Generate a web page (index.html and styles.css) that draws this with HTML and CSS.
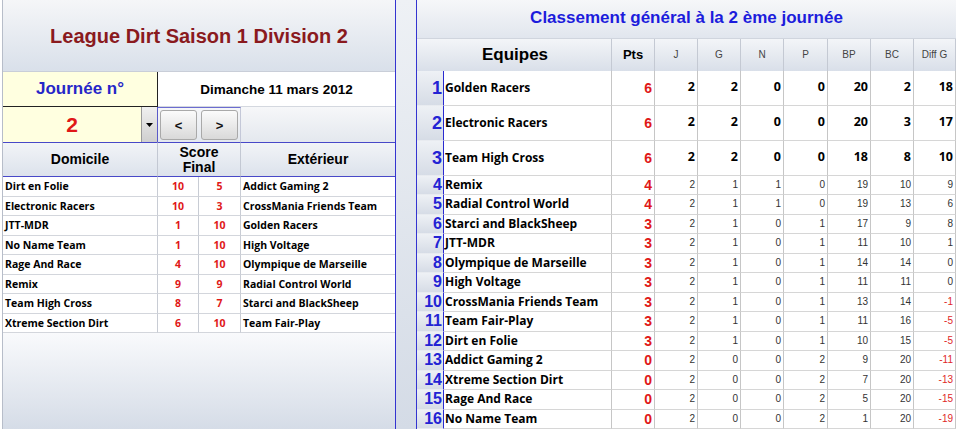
FILE: index.html
```html
<!DOCTYPE html>
<html lang="fr">
<head>
<meta charset="utf-8">
<title>League Dirt Saison 1 Division 2</title>
<link rel="stylesheet" href="styles.css">
</head>
<body>
<div class="app">
  <section class="left">
    <div class="left-title">League Dirt Saison 1 Division 2</div>
    <div class="row-journee">
      <div class="journee-label">Journée n°</div>
      <div class="journee-date">Dimanche 11 mars 2012</div>
    </div>
    <div class="row-controls">
      <div class="select">
        <span class="select-value">2</span>
        <span class="select-arrow"><svg width="7" height="4" viewBox="0 0 7 4"><path d="M0 0H7L3.5 4Z" fill="#000"/></svg></span>
      </div>
      <div class="nav">
        <button class="nav-btn">&lt;</button>
        <button class="nav-btn">&gt;</button>
      </div>
      <div class="controls-rest"></div>
    </div>
    <div class="matches">
      <div class="mh">Domicile</div>
      <div class="mh mh-score">Score<br>Final</div>
      <div class="mh">Extérieur</div>

      <div class="mc name">Dirt en Folie</div><div class="mc sc">10</div><div class="mc sc">5</div><div class="mc name away">Addict Gaming 2</div>
      <div class="mc name">Electronic Racers</div><div class="mc sc">10</div><div class="mc sc">3</div><div class="mc name away">CrossMania Friends Team</div>
      <div class="mc name">JTT-MDR</div><div class="mc sc">1</div><div class="mc sc">10</div><div class="mc name away">Golden Racers</div>
      <div class="mc name">No Name Team</div><div class="mc sc">1</div><div class="mc sc">10</div><div class="mc name away">High Voltage</div>
      <div class="mc name">Rage And Race</div><div class="mc sc">4</div><div class="mc sc">10</div><div class="mc name away">Olympique de Marseille</div>
      <div class="mc name">Remix</div><div class="mc sc">9</div><div class="mc sc">9</div><div class="mc name away">Radial Control World</div>
      <div class="mc name">Team High Cross</div><div class="mc sc">8</div><div class="mc sc">7</div><div class="mc name away">Starci and BlackSheep</div>
      <div class="mc name">Xtreme Section Dirt</div><div class="mc sc">6</div><div class="mc sc">10</div><div class="mc name away">Team Fair-Play</div>
    </div>
    <div class="left-fill"></div>
  </section>

  <div class="gutter"></div>

  <section class="right">
    <div class="right-title">Classement général à la 2 ème journée</div>
    <div class="standings">
      <div class="h h-team">Equipes</div>
      <div class="h h-pts">Pts</div>
      <div class="h">J</div>
      <div class="h">G</div>
      <div class="h">N</div>
      <div class="h">P</div>
      <div class="h">BP</div>
      <div class="h">BC</div>
      <div class="h">Diff G</div>

      <div class="c rk big">1</div><div class="c tm big">Golden Racers</div><div class="c pts big">6</div><div class="c st big">2</div><div class="c st big">2</div><div class="c st big">0</div><div class="c st big">0</div><div class="c st big">20</div><div class="c st big">2</div><div class="c st big">18</div>
      <div class="c rk big">2</div><div class="c tm big">Electronic Racers</div><div class="c pts big">6</div><div class="c st big">2</div><div class="c st big">2</div><div class="c st big">0</div><div class="c st big">0</div><div class="c st big">20</div><div class="c st big">3</div><div class="c st big">17</div>
      <div class="c rk big">3</div><div class="c tm big">Team High Cross</div><div class="c pts big">6</div><div class="c st big">2</div><div class="c st big">2</div><div class="c st big">0</div><div class="c st big">0</div><div class="c st big">18</div><div class="c st big">8</div><div class="c st big">10</div>

      <div class="c rk">4</div><div class="c tm">Remix</div><div class="c pts">4</div><div class="c st">2</div><div class="c st">1</div><div class="c st">1</div><div class="c st">0</div><div class="c st">19</div><div class="c st">10</div><div class="c st">9</div>
      <div class="c rk">5</div><div class="c tm">Radial Control World</div><div class="c pts">4</div><div class="c st">2</div><div class="c st">1</div><div class="c st">1</div><div class="c st">0</div><div class="c st">19</div><div class="c st">13</div><div class="c st">6</div>
      <div class="c rk">6</div><div class="c tm">Starci and BlackSheep</div><div class="c pts">3</div><div class="c st">2</div><div class="c st">1</div><div class="c st">0</div><div class="c st">1</div><div class="c st">17</div><div class="c st">9</div><div class="c st">8</div>
      <div class="c rk">7</div><div class="c tm">JTT-MDR</div><div class="c pts">3</div><div class="c st">2</div><div class="c st">1</div><div class="c st">0</div><div class="c st">1</div><div class="c st">11</div><div class="c st">10</div><div class="c st">1</div>
      <div class="c rk">8</div><div class="c tm">Olympique de Marseille</div><div class="c pts">3</div><div class="c st">2</div><div class="c st">1</div><div class="c st">0</div><div class="c st">1</div><div class="c st">14</div><div class="c st">14</div><div class="c st">0</div>
      <div class="c rk">9</div><div class="c tm">High Voltage</div><div class="c pts">3</div><div class="c st">2</div><div class="c st">1</div><div class="c st">0</div><div class="c st">1</div><div class="c st">11</div><div class="c st">11</div><div class="c st">0</div>
      <div class="c rk">10</div><div class="c tm">CrossMania Friends Team</div><div class="c pts">3</div><div class="c st">2</div><div class="c st">1</div><div class="c st">0</div><div class="c st">1</div><div class="c st">13</div><div class="c st">14</div><div class="c st neg">-1</div>
      <div class="c rk">11</div><div class="c tm">Team Fair-Play</div><div class="c pts">3</div><div class="c st">2</div><div class="c st">1</div><div class="c st">0</div><div class="c st">1</div><div class="c st">11</div><div class="c st">16</div><div class="c st neg">-5</div>
      <div class="c rk">12</div><div class="c tm">Dirt en Folie</div><div class="c pts">3</div><div class="c st">2</div><div class="c st">1</div><div class="c st">0</div><div class="c st">1</div><div class="c st">10</div><div class="c st">15</div><div class="c st neg">-5</div>
      <div class="c rk">13</div><div class="c tm">Addict Gaming 2</div><div class="c pts">0</div><div class="c st">2</div><div class="c st">0</div><div class="c st">0</div><div class="c st">2</div><div class="c st">9</div><div class="c st">20</div><div class="c st neg">-11</div>
      <div class="c rk">14</div><div class="c tm">Xtreme Section Dirt</div><div class="c pts">0</div><div class="c st">2</div><div class="c st">0</div><div class="c st">0</div><div class="c st">2</div><div class="c st">7</div><div class="c st">20</div><div class="c st neg">-13</div>
      <div class="c rk">15</div><div class="c tm">Rage And Race</div><div class="c pts">0</div><div class="c st">2</div><div class="c st">0</div><div class="c st">0</div><div class="c st">2</div><div class="c st">5</div><div class="c st">20</div><div class="c st neg">-15</div>
      <div class="c rk">16</div><div class="c tm">No Name Team</div><div class="c pts">0</div><div class="c st">2</div><div class="c st">0</div><div class="c st">0</div><div class="c st">2</div><div class="c st">1</div><div class="c st">20</div><div class="c st neg">-19</div>
    </div>
  </section>
</div>
</body>
</html>
```

FILE: styles.css
```css
* { box-sizing: border-box; }
html, body { margin: 0; padding: 0; background: #fff; }
body { width: 962px; height: 429px; overflow: hidden; font-family: "Liberation Sans", Arial, sans-serif; color: #000; }

.app { display: flex; height: 429px; }

/* ---------- left panel ---------- */
.left {
  width: 393px;
  margin-left: 2px;
  border-left: 1px solid #b7bdc9;
  display: flex;
  flex-direction: column;
}
.left-title {
  height: 72px;
  display: flex;
  align-items: center;
  justify-content: center;
  padding-top: 2px;
  font-weight: bold;
  font-size: 20px;
  color: #8a1a1e;
  background: linear-gradient(#f5f6f8, #d9e0ea);
  border-bottom: 1px solid #c9ced8;
}
.row-journee { display: flex; height: 35px; }
.journee-label {
  width: 155px;
  background: #ffffe0;
  border-right: 1px solid #222;
  border-bottom: 1px solid #222;
  display: flex; align-items: center; justify-content: center;
  color: #2626c8;
  font-weight: bold;
  font-size: 17px;
}
.journee-date {
  flex: 1;
  background: #fff;
  border-bottom: 1px solid #d4d8df;
  display: flex; align-items: center; justify-content: center;
  font-weight: bold;
  font-size: 13.5px;
}
.row-controls { display: flex; height: 35px; background: linear-gradient(#f6f7f9, #e4e8ee); }
.select { width: 155px; display: flex; background: #ffffe0; border-right: 1px solid #5a5ac8; }
.select-value {
  flex: 1;
  display: flex; align-items: center; justify-content: center;
  color: #e01818;
  font-weight: bold;
  font-size: 21px;
}
.select-arrow {
  width: 16px;
  display: flex; align-items: center; justify-content: center;
  background: linear-gradient(#f0f0f0, #cfcfcf);
  border-left: 1px solid #9a9a9a;
}
.nav {
  width: 83px;
  display: flex;
  gap: 4px;
  padding: 2px;
  border-top: 1px solid #6c6cd0;
  border-right: 1px solid #c4c8d8;
}
.nav-btn {
  width: 37px;
  height: 30px;
  margin: 0;
  padding: 0;
  border: 1px solid #a9a9a9;
  border-radius: 3px;
  background: linear-gradient(#fbfbfb, #d9d9d9);
  font-family: "Liberation Sans", Arial, sans-serif;
  font-weight: bold;
  font-size: 13px;
  color: #111;
}
.controls-rest { flex: 1; }

.matches {
  display: grid;
  grid-template-columns: 155px 41px 42px 154px;
  grid-template-rows: 35px;
  grid-auto-rows: 19.5px;
}
.mh {
  display: flex; align-items: center; justify-content: center;
  text-align: center;
  font-weight: bold;
  font-size: 14px;
  line-height: 15px;
  background: linear-gradient(#f2f4f7, #dce2ec);
  border-top: 1px solid #4848c8;
  border-bottom: 1px solid #4848c8;
  border-right: 1px solid #c3c8d3;
}
.mh-score { grid-column: span 2; padding-top: 1px; }
.mh:nth-child(3) { border-right: none; }
.mc {
  display: flex; align-items: center;
  background: #fff;
  border-right: 1px solid #c8ccd4;
  border-bottom: 1px solid #d3d6dc;
  font-family: "Open Sans", sans-serif;
  font-weight: 700;
  font-size: 10.5px;
  white-space: nowrap;
  overflow: hidden;
}
.mc.away { border-right: none; }
.mc.name { padding-left: 2px; }
.mc.sc { justify-content: center; color: #e01818; }
.left-fill { flex: 1; background: linear-gradient(#f9fafc, #d5dce7); }

/* ---------- gutter ---------- */
.gutter {
  width: 22px;
  border-left: 1px solid #3434d0;
  border-right: 1px solid #3434d0;
  background: linear-gradient(#eef1f5, #d4dbe6);
}

/* ---------- right panel ---------- */
.right { width: 539px; display: flex; flex-direction: column; }
.right-title {
  height: 40px;
  display: flex; align-items: center; justify-content: center;
  padding-bottom: 2px;
  font-weight: bold;
  font-size: 17px;
  color: #1c1cdc;
  background: linear-gradient(#f6f7f9, #e1e6ee);
  border-bottom: 1px solid #d0d5de;
}
.standings {
  display: grid;
  grid-template-columns: 27px 168px 43px 43px 43px 43px 44px 43px 43px 42px;
  grid-template-rows: 32px 35px 35px 35px;
  grid-auto-rows: 19.5px;
}
.h {
  display: flex; align-items: center; justify-content: center;
  background: linear-gradient(#f3f5f8, #d9dfe9);
  border-right: 1px solid #c4c9d3;
  font-family: "Liberation Sans", Arial, sans-serif;
  font-size: 10px;
  color: #444;
}
.h-team { grid-column: span 2; font-weight: bold; font-size: 17px; color: #000; padding-left: 2px; }
.h-pts { font-weight: bold; font-size: 13px; color: #000; }
.c {
  display: flex; align-items: center; justify-content: flex-end;
  background: #fff;
  border-right: 1px solid #c6c6c6;
  border-bottom: 1px solid #d6d6d6;
  white-space: nowrap;
  overflow: hidden;
  line-height: 1;
}
.c.rk {
  background: linear-gradient(#eef1f5, #d6dce6);
  border-right: 1px solid #2a2ad0;
  border-bottom: 1px solid #e8ebf0;
  color: #2323d4;
  font-weight: bold;
  font-size: 16px;
  padding-right: 1px;
}
.c.rk.big { font-size: 18px; }
.c.tm {
  justify-content: flex-start;
  padding-left: 1px;
  font-family: "Open Sans", sans-serif;
  font-weight: 700;
  font-size: 12px;
}
.c.pts { color: #e01818; font-weight: bold; font-size: 14px; padding-right: 2px; }
.c.st { font-size: 10px; color: #333; padding-right: 2px; }
.c.st.big { font-family: "Open Sans", sans-serif; font-weight: 700; font-size: 12.5px; color: #000; padding-right: 2px; }
.c.st.neg { color: #e02828; }
```
